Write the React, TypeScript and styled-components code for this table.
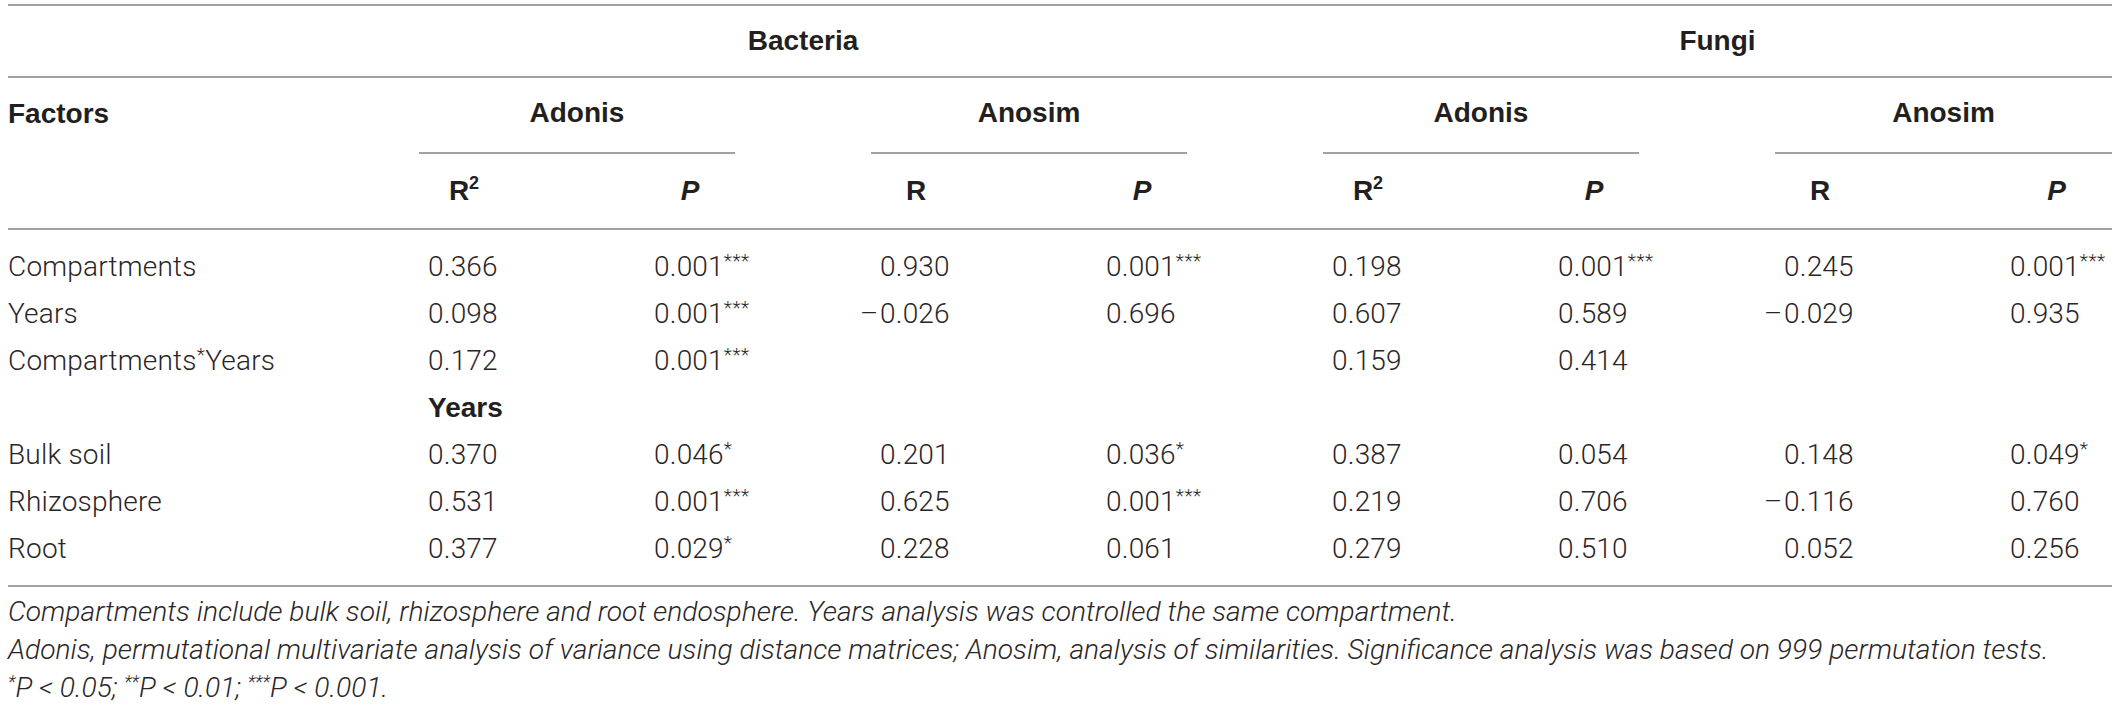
import React from 'react';
import styled, { createGlobalStyle } from 'styled-components';

const GlobalStyle = createGlobalStyle`
  html, body {
    margin: 0;
    padding: 0;
    background: #ffffff;
  }
`;

const COLS = '343px repeat(7, 226px) 179px';
const RULE = '#a2a2a2';

const Page = styled.div`
  padding: 4px 8px 0;
  color: #231f20;
  font-family: 'Liberation Sans', Arial, sans-serif;
  overflow: hidden;
`;

const HeadRow = styled.div<{ $h: number; $top?: boolean; $bottom?: boolean }>`
  display: grid;
  grid-template-columns: ${COLS};
  height: ${(p) => p.$h}px;
  align-items: center;
  border-top: ${(p) => (p.$top ? `2px solid ${RULE}` : 'none')};
  border-bottom: ${(p) => (p.$bottom ? `2px solid ${RULE}` : 'none')};
  font-size: 28px;
  font-weight: 700;
`;

const SpanHead = styled.div<{ $from: number; $span: number; $last?: boolean }>`
  grid-column: ${(p) => p.$from} / span ${(p) => p.$span};
  padding: ${(p) => (p.$last ? '0 0 0 68px' : '0 68px')};
  text-align: center;
`;

const GroupCell = styled(SpanHead)`
  align-self: stretch;
`;

const GroupLabel = styled.div`
  height: 100%;
  box-sizing: border-box;
  display: flex;
  align-items: center;
  justify-content: center;
  padding-bottom: 4px;
  border-bottom: 2px solid ${RULE};
`;

const FactorHead = styled.div`
  grid-column: 1;
  padding-bottom: 4px;
`;

const StatHead = styled.div<{ $last?: boolean; $italic?: boolean }>`
  padding: ${(p) => (p.$last ? '0 0 0 68px' : '0 68px')};
  text-align: center;
  font-style: ${(p) => (p.$italic ? 'italic' : 'normal')};
`;

const Sup = styled.sup`
  font-size: 18px;
  line-height: 0;
  vertical-align: 11px;
`;

const Body = styled.div`
  padding: 13px 0;
  border-bottom: 2px solid ${RULE};
`;

const DataRow = styled.div`
  display: grid;
  grid-template-columns: ${COLS};
  height: 47px;
  align-items: center;
  font-family: Roboto, 'Liberation Sans', sans-serif;
  font-weight: 300;
  font-size: 28px;
  letter-spacing: 0.2px;
  color: #2a2627;
`;

const Factor = styled.div`
  grid-column: 1;
`;

const Value = styled.div`
  padding-left: 77px;
  white-space: nowrap;
`;

const SubHead = styled(Value)`
  font-family: 'Liberation Sans', Arial, sans-serif;
  font-weight: 700;
  letter-spacing: 0;
  color: #231f20;
`;

const Minus = styled.span`
  display: inline-block;
  width: 20px;
  margin-left: -20px;
`;

const Stars = styled.span`
  font-size: 19px;
  vertical-align: 9px;
  line-height: 0;
  letter-spacing: 0.5px;
`;

const Caption = styled.div`
  padding-top: 6px;
  font-family: Roboto, 'Liberation Sans', sans-serif;
  font-weight: 300;
  font-style: italic;
  font-size: 28.2px;
  line-height: 38px;
  color: #2a2627;
`;

const CaptionLine = styled.div`
  white-space: nowrap;
`;

const CapStars = styled.span`
  font-size: 18px;
  vertical-align: 9px;
  line-height: 0;
`;

type Row = { factor: string; values: (string | null)[] };

const rows: Row[] = [
  {
    factor: 'Compartments',
    values: ['0.366', '0.001***', '0.930', '0.001***', '0.198', '0.001***', '0.245', '0.001***'],
  },
  {
    factor: 'Years',
    values: ['0.098', '0.001***', '-0.026', '0.696', '0.607', '0.589', '-0.029', '0.935'],
  },
  {
    factor: 'Compartments*Years',
    values: ['0.172', '0.001***', null, null, '0.159', '0.414', null, null],
  },
];

const yearRows: Row[] = [
  {
    factor: 'Bulk soil',
    values: ['0.370', '0.046*', '0.201', '0.036*', '0.387', '0.054', '0.148', '0.049*'],
  },
  {
    factor: 'Rhizosphere',
    values: ['0.531', '0.001***', '0.625', '0.001***', '0.219', '0.706', '-0.116', '0.760'],
  },
  {
    factor: 'Root',
    values: ['0.377', '0.029*', '0.228', '0.061', '0.279', '0.510', '0.052', '0.256'],
  },
];

const Num: React.FC<{ raw: string | null }> = ({ raw }) => {
  if (!raw) return <Value />;
  const neg = raw.startsWith('-');
  const body = neg ? raw.slice(1) : raw;
  const m = body.match(/^([0-9.]+)(\**)$/);
  const num = m ? m[1] : body;
  const stars = m ? m[2] : '';
  return (
    <Value>
      {neg && <Minus>–</Minus>}
      {num}
      {stars && <Stars>{stars}</Stars>}
    </Value>
  );
};

const FactorLabel: React.FC<{ text: string }> = ({ text }) => {
  const parts = text.split('*');
  if (parts.length === 1) return <Factor>{text}</Factor>;
  return (
    <Factor>
      {parts[0]}
      <Stars>*</Stars>
      {parts[1]}
    </Factor>
  );
};

const TableRow: React.FC<{ row: Row }> = ({ row }) => (
  <DataRow>
    <FactorLabel text={row.factor} />
    {row.values.map((v, i) => (
      <Num key={i} raw={v} />
    ))}
  </DataRow>
);

const stats = [
  { label: 'R', sup: '2' },
  { label: 'P', italic: true },
  { label: 'R' },
  { label: 'P', italic: true },
  { label: 'R', sup: '2' },
  { label: 'P', italic: true },
  { label: 'R' },
  { label: 'P', italic: true },
];

const groups = ['Adonis', 'Anosim', 'Adonis', 'Anosim'];

export default function App() {
  return (
    <Page>
      <GlobalStyle />
      <HeadRow $h={70} $top $bottom>
        <SpanHead $from={2} $span={4}>
          Bacteria
        </SpanHead>
        <SpanHead $from={6} $span={4} $last>
          Fungi
        </SpanHead>
      </HeadRow>
      <HeadRow $h={76}>
        <FactorHead>Factors</FactorHead>
        {groups.map((g, i) => (
          <GroupCell key={i} $from={2 + i * 2} $span={2} $last={i === 3}>
            <GroupLabel>{g}</GroupLabel>
          </GroupCell>
        ))}
      </HeadRow>
      <HeadRow $h={74} $bottom>
        <div />
        {stats.map((s, i) => (
          <StatHead key={i} $last={i === 7} $italic={s.italic}>
            {s.label}
            {s.sup && <Sup>{s.sup}</Sup>}
          </StatHead>
        ))}
      </HeadRow>
      <Body>
        {rows.map((r) => (
          <TableRow key={r.factor} row={r} />
        ))}
        <DataRow>
          <div />
          <SubHead>Years</SubHead>
        </DataRow>
        {yearRows.map((r) => (
          <TableRow key={r.factor} row={r} />
        ))}
      </Body>
      <Caption>
        <CaptionLine>
          Compartments include bulk soil, rhizosphere and root endosphere. Years analysis was controlled the
          same compartment.
        </CaptionLine>
        <CaptionLine>
          Adonis, permutational multivariate analysis of variance using distance matrices; Anosim, analysis of
          similarities. Significance analysis was based on 999 permutation tests.
        </CaptionLine>
        <CaptionLine>
          <CapStars>*</CapStars>P &lt; 0.05; <CapStars>**</CapStars>P &lt; 0.01; <CapStars>***</CapStars>P
          &lt; 0.001.
        </CaptionLine>
      </Caption>
    </Page>
  );
}
